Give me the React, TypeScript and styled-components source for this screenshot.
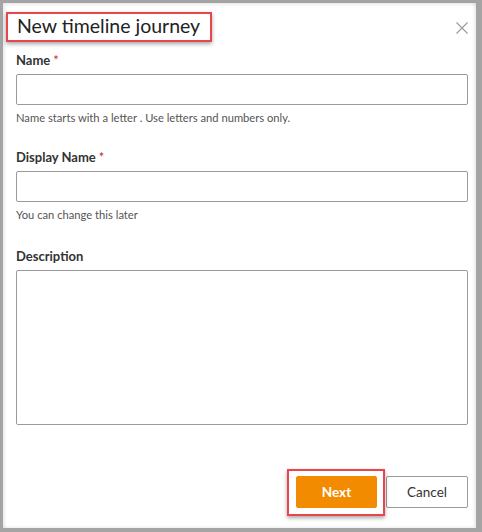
import React from "react";
import styled, { createGlobalStyle } from "styled-components";

const GlobalStyle = createGlobalStyle`
  html, body {
    margin: 0;
    padding: 0;
    background: #a4a4a4;
  }
  body {
    font-family: Lato, "Open Sans", "Noto Sans", sans-serif;
    color: #333;
  }
  * { box-sizing: border-box; }
`;

const Modal = styled.div`
  margin: 3px 0 0 3px;
  width: 473px;
  height: 525px;
  background: #fff;
  box-shadow: inset 2px 2px 3px rgba(0, 0, 0, 0.08), inset -2px -1px 3px rgba(0, 0, 0, 0.08);
  display: flex;
  flex-direction: column;
  padding: 10px 8px 20px 13px;
`;

const Header = styled.div`
  display: flex;
  justify-content: space-between;
  align-items: flex-start;
`;

const Highlight = styled.div<{ $t: number; $r: number; $b: number; $l: number }>`
  position: relative;
  &::after {
    content: "";
    position: absolute;
    top: ${(p) => -p.$t}px;
    right: ${(p) => -p.$r}px;
    bottom: ${(p) => -p.$b}px;
    left: ${(p) => -p.$l}px;
    border: 2px solid #e8454d;
    box-shadow: 0 2px 4px rgba(0, 0, 0, 0.35);
    pointer-events: none;
  }
`;

const Title = styled.h2`
  margin: 0 0 0 1px;
  font-size: 19.5px;
  line-height: 25px;
  font-weight: 400;
  color: #222;
`;

const CloseButton = styled.button`
  margin-top: 9px;
  padding: 0;
  border: none;
  background: none;
  width: 12px;
  height: 12px;
  display: block;
  cursor: pointer;
`;

const Field = styled.div<{ $top: number }>`
  display: flex;
  flex-direction: column;
  margin-top: ${(p) => p.$top}px;
`;

const Label = styled.label`
  font-size: 13px;
  line-height: 16px;
  font-weight: 700;
  color: #333;
  margin-bottom: 6px;
`;

const Required = styled.span`
  color: #c9252c;
  margin-left: 3px;
  font-weight: 400;
`;

const TextInput = styled.input`
  width: 100%;
  height: 31px;
  border: 1px solid #9a9a9a;
  border-radius: 2px;
  font: inherit;
  padding: 0 8px;
  outline: none;
`;

const TextArea = styled.textarea`
  width: 100%;
  height: 155px;
  border: 1px solid #9a9a9a;
  border-radius: 2px;
  font: inherit;
  padding: 6px 8px;
  resize: none;
  outline: none;
`;

const Helper = styled.div`
  font-size: 11.2px;
  line-height: 14px;
  color: #555;
  margin-top: 6px;
`;

const Footer = styled.div`
  margin-top: auto;
  display: flex;
  justify-content: flex-end;
  gap: 9px;
`;

const Button = styled.button<{ $primary?: boolean }>`
  height: 32px;
  width: ${(p) => (p.$primary ? 81 : 82)}px;
  border-radius: 2px;
  font-family: inherit;
  font-size: 13.5px;
  cursor: pointer;
  border: 1px solid ${(p) => (p.$primary ? "#f38b00" : "#9a9a9a")};
  background: ${(p) => (p.$primary ? "#f38b00" : "#fff")};
  color: ${(p) => (p.$primary ? "#fff" : "#333")};
  font-weight: ${(p) => (p.$primary ? 700 : 400)};
`;

export default function App() {
  return (
    <>
      <GlobalStyle />
      <Modal>
        <Header>
          <Highlight $t={1} $r={12} $b={4} $l={10}>
            <Title>New timeline journey</Title>
          </Highlight>
          <CloseButton aria-label="Close">
            <svg width="12" height="12" viewBox="0 0 12 12">
              <path d="M0.5 0.5 L11.5 11.5 M11.5 0.5 L0.5 11.5" stroke="#9a9a9a" strokeWidth="1.1" fill="none" />
            </svg>
          </CloseButton>
        </Header>

        <Field $top={14}>
          <Label>
            Name<Required>*</Required>
          </Label>
          <TextInput />
          <Helper>Name starts with a letter . Use letters and numbers only.</Helper>
        </Field>

        <Field $top={24}>
          <Label>
            Display Name<Required>*</Required>
          </Label>
          <TextInput />
          <Helper>You can change this later</Helper>
        </Field>

        <Field $top={26}>
          <Label>Description</Label>
          <TextArea />
        </Field>

        <Footer>
          <Highlight $t={7} $r={8} $b={8} $l={9}>
            <Button $primary>Next</Button>
          </Highlight>
          <Button>Cancel</Button>
        </Footer>
      </Modal>
    </>
  );
}
